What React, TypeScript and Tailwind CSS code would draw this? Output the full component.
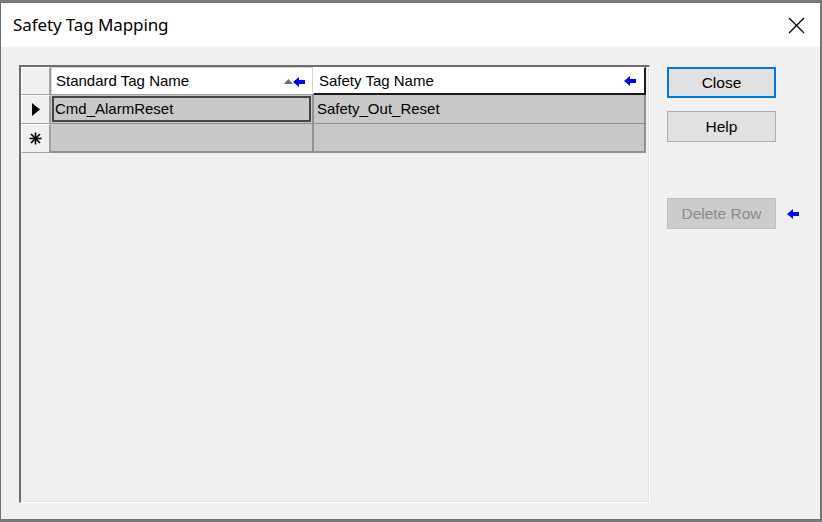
const BlueArrow = () => (
  <svg width="12" height="10" viewBox="0 0 12 10" className="shrink-0">
    <polygon points="0,5 6,0 6,3 12,3 12,7 6,7 6,10" fill="#0000ff" />
  </svg>
);

const SortUp = () => (
  <svg width="9" height="5" viewBox="0 0 9 5" className="shrink-0">
    <polygon points="0,5 4.5,0 9,5" fill="#6d6d6d" />
  </svg>
);

const RowPointer = () => (
  <svg width="8" height="13" viewBox="0 0 8 13">
    <polygon points="0,0 8,6.5 0,13" fill="#000" />
  </svg>
);

const NewRowStar = () => (
  <svg width="13" height="13" viewBox="0 0 13 13" stroke="#000" strokeWidth="1.6">
    <line x1="6.5" y1="0.5" x2="6.5" y2="12.5" />
    <line x1="0.5" y1="6.5" x2="12.5" y2="6.5" />
    <line x1="2" y1="2" x2="11" y2="11" />
    <line x1="11" y1="2" x2="2" y2="11" />
  </svg>
);

const RowHeader = ({ children }: { children?: React.ReactNode }) => (
  <div className="w-[30px] h-full flex items-center justify-center bg-[#f0f0f0] border-t border-l border-t-white border-l-white border-r-2 border-b border-r-[#a0a0a0] border-b-[#a0a0a0]">
    {children}
  </div>
);

const DialogButton: React.FC<{ label: string; kind?: "default" | "normal" | "disabled" }> = ({
  label,
  kind = "normal",
}) => (
  <div
    className={`w-[109px] h-[31px] flex items-center justify-center text-[15.5px]
      ${kind === "default" && "border-2 border-[#0078d7] bg-[#e1e1e1] text-black"}
      ${kind === "normal" && "border border-[#adadad] bg-[#e1e1e1] text-black"}
      ${kind === "disabled" && "border border-[#bfbfbf] bg-[#cccccc] text-[#8a8a8a]"}`}
  >
    {label}
  </div>
);

export default function App() {
  return (
    <div className="w-[822px] h-[522px] bg-[#7a7a7a] pt-[2px] font-['Liberation_Sans',Arial,sans-serif] text-black">
      <div className="w-[821px] h-[518px] border border-[#707070] bg-[#f0f0f0] flex flex-col">
        {/* title bar */}
        <div className="h-[44px] bg-white flex items-center justify-between pl-[12px] pr-[15px]">
          <span className="text-[17px] font-['Noto_Sans','Liberation_Sans',sans-serif] tracking-[-0.1px]">
            Safety Tag Mapping
          </span>
          <svg width="17" height="17" viewBox="0 0 17 17" stroke="#000" strokeWidth="1.3">
            <line x1="1" y1="1" x2="16" y2="16" />
            <line x1="16" y1="1" x2="1" y2="16" />
          </svg>
        </div>

        {/* body */}
        <div className="flex-1 flex pt-[18px] pl-[18px]">
          {/* grid */}
          <div className="w-[631px] h-[438px] border-l-2 border-t-2 border-[#6d6d6d] border-r border-b border-r-white border-b-white">
            <div className="w-full h-full border-r border-b border-[#e3e3e3] flex flex-col">
              {/* header row */}
              <div className="flex h-[28px]">
                <RowHeader />
                <div className="w-[262px] h-full bg-white border border-[#d4d4d4] border-b-[#a0a0a0] flex items-center pl-[4px] pr-[7px] pt-[1px] text-[15px]">
                  <span className="flex-1">Standard Tag Name</span>
                  <SortUp />
                  <BlueArrow />
                </div>
                <div className="w-[333px] h-full bg-white border border-white border-r-2 border-b-2 border-r-[#1a1a1a] border-b-[#1a1a1a] flex items-center pl-[5px] pr-[8px] pt-[1px] text-[15px]">
                  <span className="flex-1">Safety Tag Name</span>
                  <BlueArrow />
                </div>
              </div>

              {/* data row */}
              <div className="flex h-[29px]">
                <RowHeader>
                  <RowPointer />
                </RowHeader>
                <div className="w-[262px] h-full bg-[#c8c8c8] border-r border-b border-[#909090] p-[1px]">
                  <div className="w-full h-full border-2 border-[#444444] flex items-center pl-[1px] pt-[1px] text-[15px]">
                    Cmd_AlarmReset
                  </div>
                </div>
                <div className="w-[333px] h-full bg-[#c8c8c8] border-l border-r-2 border-b border-[#909090] flex items-center pl-[3px] pt-[1px] text-[15px]">
                  Safety_Out_Reset
                </div>
              </div>

              {/* new row */}
              <div className="flex h-[29px]">
                <RowHeader>
                  <NewRowStar />
                </RowHeader>
                <div className="w-[262px] h-full bg-[#c8c8c8] border-r border-b-2 border-[#909090]" />
                <div className="w-[333px] h-full bg-[#c8c8c8] border-l border-r-2 border-b-2 border-[#909090]" />
              </div>
            </div>
          </div>

          {/* buttons */}
          <div className="flex flex-col pl-[17px] pt-[2px]">
            <DialogButton label="Close" kind="default" />
            <div className="mt-[13px]">
              <DialogButton label="Help" />
            </div>
            <div className="mt-[56px] flex items-center gap-[11px]">
              <DialogButton label="Delete Row" kind="disabled" />
              <BlueArrow />
            </div>
          </div>
        </div>
      </div>
    </div>
  );
}
